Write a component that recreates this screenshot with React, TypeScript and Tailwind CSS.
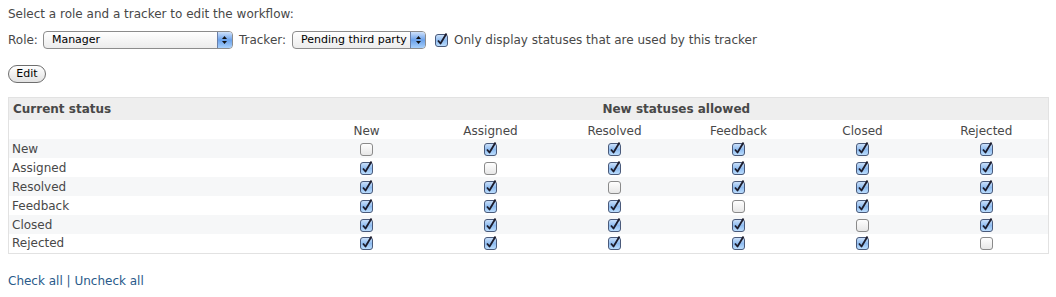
import React from 'react';

const STATUSES = ['New', 'Assigned', 'Resolved', 'Feedback', 'Closed', 'Rejected'];

function MacCheckbox({ checked }: { checked: boolean }) {
  return (
    <svg width="13" height="14" viewBox="0 0 13 14" className="inline-block align-middle">
      <defs>
        <linearGradient id="cbOn" x1="0" y1="0" x2="0" y2="1">
          <stop offset="0" stopColor="#cfe3fb" />
          <stop offset="0.5" stopColor="#8fbcf0" />
          <stop offset="1" stopColor="#bfe0ff" />
        </linearGradient>
        <linearGradient id="cbOff" x1="0" y1="0" x2="0" y2="1">
          <stop offset="0" stopColor="#ffffff" />
          <stop offset="1" stopColor="#e6e6e6" />
        </linearGradient>
      </defs>
      <rect
        x="0.5"
        y="1.5"
        width="12"
        height="12"
        rx="2.5"
        fill={checked ? 'url(#cbOn)' : 'url(#cbOff)'}
        stroke={checked ? '#4a5a7a' : '#8a8a8a'}
      />
      {checked && (
        <path d="M3 7.5 L5.5 10.5 L11.5 0.5" fill="none" stroke="#1c1c2c" strokeWidth="1.8" strokeLinejoin="round" />
      )}
    </svg>
  );
}

function MacSelect({ value, width }: { value: string; width: string }) {
  return (
    <div
      className={`${width} h-[18px] flex items-stretch rounded-[4px] border border-[#8c8c8c] bg-gradient-to-b from-white to-[#ececec] overflow-hidden`}
    >
      <span className="flex-1 pl-[8px] text-[11px] leading-[16px] text-black font-['DejaVu_Sans',sans-serif] truncate">
        {value}
      </span>
      <span className="w-[15px] flex flex-col items-center justify-center gap-[2px] bg-gradient-to-b from-[#cfe1fa] via-[#6aa1ea] to-[#a8d0fb] border-l border-[#6a7fa8]">
        <svg width="5" height="3" viewBox="0 0 5 3"><path d="M0 3 L2.5 0 L5 3Z" fill="#111" /></svg>
        <svg width="5" height="3" viewBox="0 0 5 3"><path d="M0 0 L2.5 3 L5 0Z" fill="#111" /></svg>
      </span>
    </div>
  );
}

function allowed(from: number, to: number) {
  return from !== to;
}

export default function App() {
  return (
    <div className="w-[1056px] h-[297px] bg-white px-[8px] pt-[5px] text-[12px] text-[#484848] font-['DejaVu_Sans',Verdana,sans-serif]">
      <p className="leading-[18px]">Select a role and a tracker to edit the workflow:</p>

      <div className="mt-[8px] flex items-center h-[18px]">
        <span className="mr-[5px]">Role:</span>
        <MacSelect value="Manager" width="w-[190px]" />
        <span className="ml-[6px] mr-[6px]">Tracker:</span>
        <MacSelect value="Pending third party" width="w-[134px]" />
        <span className="ml-[9px] mr-[6px] flex items-center">
          <MacCheckbox checked />
        </span>
        <span>Only display statuses that are used by this tracker</span>
      </div>

      <div className="mt-[15px]">
        <button className="h-[18px] w-[38px] rounded-full border border-[#6e6e6e] bg-gradient-to-b from-white to-[#e2e2e2] text-[11px] leading-[15px] text-black">
          Edit
        </button>
      </div>

      <table className="mt-[14px] w-[1040px] border-collapse border border-[#e2e2e2] table-fixed">
        <colgroup>
          <col className="w-[296px]" />
          {STATUSES.map(s => (
            <col key={s} className="w-[124px]" />
          ))}
        </colgroup>
        <thead>
          <tr className="bg-[#eeeeee] h-[23px]">
            <th className="text-left pl-[4px] font-bold">Current status</th>
            <th colSpan={6} className="text-center font-bold">New statuses allowed</th>
          </tr>
          <tr className="h-[19px]">
            <td />
            {STATUSES.map(s => (
              <td key={s} className="text-center leading-[16px] pt-[2px]">{s}</td>
            ))}
          </tr>
        </thead>
        <tbody>
          {STATUSES.map((from, i) => (
            <tr key={from} className={`h-[19px] ${i % 2 === 0 ? 'bg-[#f6f7f8]' : 'bg-white'}`}>
              <td className="pl-[3px] leading-[16px]">{from}</td>
              {STATUSES.map((to, j) => (
                <td key={to} className="text-center leading-[0]">
                  <MacCheckbox checked={allowed(i, j)} />
                </td>
              ))}
            </tr>
          ))}
        </tbody>
      </table>

      <p className="mt-[18px] text-[#2a5a8a]">
        <a>Check all</a> | <a>Uncheck all</a>
      </p>
    </div>
  );
}
